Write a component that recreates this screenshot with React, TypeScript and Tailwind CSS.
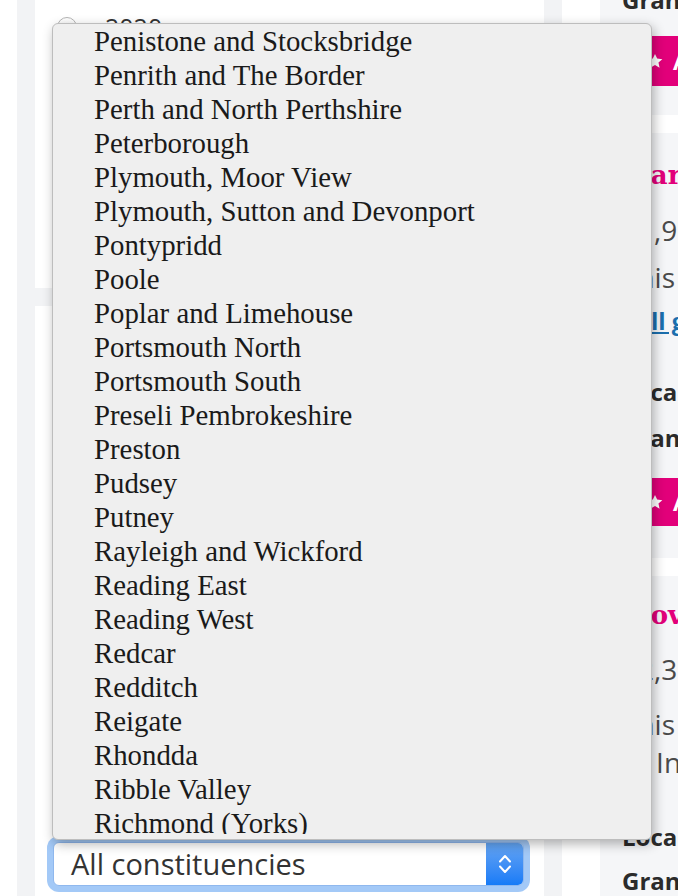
import React from "react";

const constituencies = [
  "Penistone and Stocksbridge",
  "Penrith and The Border",
  "Perth and North Perthshire",
  "Peterborough",
  "Plymouth, Moor View",
  "Plymouth, Sutton and Devonport",
  "Pontypridd",
  "Poole",
  "Poplar and Limehouse",
  "Portsmouth North",
  "Portsmouth South",
  "Preseli Pembrokeshire",
  "Preston",
  "Pudsey",
  "Putney",
  "Rayleigh and Wickford",
  "Reading East",
  "Reading West",
  "Redcar",
  "Redditch",
  "Reigate",
  "Rhondda",
  "Ribble Valley",
  "Richmond (Yorks)",
];

function Star() {
  return (
    <svg width="18" height="18" viewBox="0 0 24 24" className="shrink-0">
      <path
        d="M12 2.5l2.9 6.3 6.9.7-5.2 4.6 1.5 6.8L12 17.4l-6.1 3.5 1.5-6.8-5.2-4.6 6.9-.7z"
        fill="white"
      />
    </svg>
  );
}

function ShortlistButton({ tall }: { tall?: boolean }) {
  return (
    <div
      className={`flex ${tall ? "h-[50px]" : "h-[48px]"} items-center gap-[9px] whitespace-nowrap bg-[#e2007a] pl-[24px] text-[22px] font-bold text-white`}
    >
      <Star />
      <span>Add to shortlist</span>
    </div>
  );
}

function LeftColumn() {
  return (
    <div className="ml-[17px] flex w-[545px] shrink-0 flex-col gap-[18px] bg-[#f2f3f5] px-[18px]">
      <div className="h-[288px] shrink-0 bg-white">
        <div className="ml-[22px] mt-[14px] flex items-center gap-[28px]">
          <div className="h-[20px] w-[20px] rounded-full border border-[#b5b5b5] bg-gradient-to-b from-white to-[#ececec]" />
          <span className="text-[25px] leading-[26px] text-[#333]">2020</span>
        </div>
      </div>
      <div className="flex flex-1 flex-col justify-end bg-white pb-[10px]">
        <div className="ml-[18px] flex h-[44px] w-[471px] items-center rounded-[6px] border border-[#8fb8ee] bg-white shadow-[0_0_0_6px_#a3c9f7]">
          <span className="flex-1 pl-[17px] text-[29px] text-[#333]">
            All constituencies
          </span>
          <div className="flex h-full w-[37px] flex-col items-center justify-center gap-[2px] rounded-r-[5px] bg-gradient-to-b from-[#63a4f2] to-[#157bf7]">
            <svg width="14" height="9" viewBox="0 0 14 9">
              <polyline points="2,7.5 7,2 12,7.5" fill="none" stroke="white" strokeWidth="2" strokeLinecap="round" strokeLinejoin="round" />
            </svg>
            <svg width="14" height="9" viewBox="0 0 14 9">
              <polyline points="2,1.5 7,7 12,1.5" fill="none" stroke="white" strokeWidth="2" strokeLinecap="round" strokeLinejoin="round" />
            </svg>
          </div>
        </div>
      </div>
    </div>
  );
}

function RightColumn() {
  return (
    <div className="flex w-[420px] shrink-0 flex-col gap-[18px] whitespace-nowrap text-[28px] text-[#2b2b2b]">
      {/* card cut off at top */}
      <div className="h-[115px] shrink-0 bg-[#f5f6f8] px-[22px]">
        <div className="-mt-[22px] text-[24px] font-bold leading-[44px]">Grant type: Revenue</div>
        <div className="mt-[14px]">
          <ShortlistButton tall />
        </div>
      </div>

      <div className="h-[425px] shrink-0 bg-[#f5f6f8] px-[22px] pt-[26px]">
        <div className="font-['DejaVu_Serif',serif] text-[26px] font-bold leading-[32px] text-[#e2007a]">
          Market Towns Fund
        </div>
        <div className="mt-[23px] leading-[32px] text-[#4a4a4a]">£1,950</div>
        <div className="mt-[9px] leading-[44px] text-[#4a4a4a]">
          <div>This fund supports local projects</div>
          <div className="text-[24px] font-bold text-[#1b6fae] underline">Full guidance</div>
        </div>
        <div className="mt-[26px] text-[24px] font-bold leading-[46px]">
          <div>Local authority: Leeds</div>
          <div>Grant type: Capital</div>
        </div>
        <div className="mt-[17px]">
          <ShortlistButton />
        </div>
      </div>

      <div className="flex-1 bg-[#f5f6f8] px-[22px] pt-[23px]">
        <div className="font-['DejaVu_Serif',serif] text-[26px] font-bold leading-[32px] text-[#e2007a]">
          Movement for Change
        </div>
        <div className="mt-[22px] leading-[32px] text-[#4a4a4a]">£2,300</div>
        <div className="mt-[20px] leading-[38px] text-[#4a4a4a]">
          <div>This fund helps groups</div>
          <div>to Increase their reach</div>
        </div>
        <div className="mt-[34px] text-[24px] font-bold leading-[44px]">
          <div>Local authority: York</div>
          <div>Grant type: Revenue</div>
        </div>
      </div>
    </div>
  );
}

function ConstituencyList() {
  return (
    <div className="absolute left-[52px] top-[23px] h-[817px] w-[600px] rounded-[6px] border border-[#bdbdbd] bg-[#efefef] pb-[6px] shadow-[2px_4px_12px_rgba(0,0,0,0.3)]">
      <div className="h-[810px] overflow-hidden">
        {constituencies.map((name) => (
          <div
            key={name}
            className="h-[34px] whitespace-nowrap pl-[41px] font-['Liberation_Serif',serif] text-[28.8px] leading-[34px] text-[#1a1a1a]"
          >
            {name}
          </div>
        ))}
      </div>
    </div>
  );
}

export default function App() {
  return (
    <div className="relative h-[896px] w-[678px] overflow-hidden bg-white font-['Open_Sans',sans-serif]">
      <div className="flex h-full">
        <LeftColumn />
        <div className="w-[38px] shrink-0" />
        <RightColumn />
      </div>
      <ConstituencyList />
    </div>
  );
}
